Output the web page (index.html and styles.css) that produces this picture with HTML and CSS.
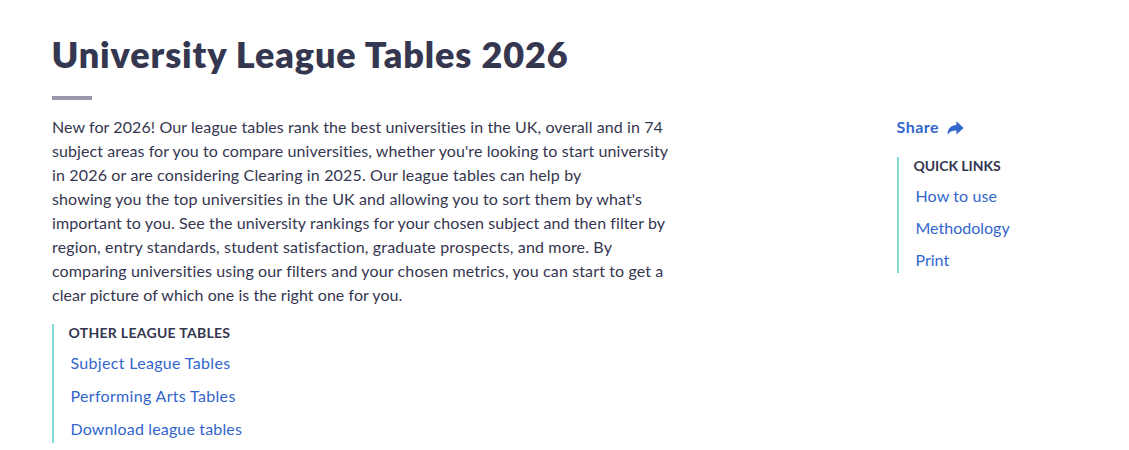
FILE: index.html
```html
<!DOCTYPE html>
<html lang="en">
<head>
<meta charset="utf-8">
<title>University League Tables 2026</title>
<link rel="stylesheet" href="styles.css">
</head>
<body>
<main class="page">
  <h1 class="title">University League Tables 2026</h1>
  <div class="rule"></div>
  <div class="columns">
    <section class="content">
      <p class="intro">
        <span class="line t2">New for 2026! Our league tables rank the best universities in the UK, overall and in 74</span>
        <span class="line t2">subject areas for you to compare universities, whether you're looking to start university</span>
        <span class="line t4">in 2026 or are considering Clearing in 2025. Our league tables can help by</span>
        <span class="line t3">showing you the top universities in the UK and allowing you to sort them by what's</span>
        <span class="line t2">important to you. See the university rankings for your chosen subject and then filter by</span>
        <span class="line t4">region, entry standards, student satisfaction, graduate prospects, and more. By</span>
        <span class="line t3">comparing universities using our filters and your chosen metrics, you can start to get a</span>
        <span class="line t1">clear picture of which one is the right one for you.</span>
      </p>
      <nav class="links tables">
        <h2 class="heading">OTHER LEAGUE TABLES</h2>
        <a class="t5" href="#">Subject League Tables</a>
        <a class="t5" href="#">Performing Arts Tables</a>
        <a class="t4" href="#">Download league tables</a>
      </nav>
    </section>
    <aside class="side">
      <a class="share" href="#"><span>Share</span>
        <svg class="arrow" viewBox="0 0 17 14"><path d="M9.4 .2 16.6 7 9.4 13.6V9.6C5.5 9.5 2.7 10.7.5 13.8.6 8.3 3.4 4.5 9.4 4.1Z"/></svg>
      </a>
      <nav class="links quick">
        <h2 class="heading">QUICK LINKS</h2>
        <a class="t3" href="#">How to use</a>
        <a href="#">Methodology</a>
        <a href="#">Print</a>
      </nav>
    </aside>
  </div>
</main>
</body>
</html>
```
FILE: styles.css
```css
* { box-sizing: border-box; }
body { margin: 0; background: #fff; color: #35364f; font: 16px/24px Lato, "Open Sans", sans-serif; }
.page { padding: 30px 52px 0; }
.title { margin: 0 0 0 -.5px; font-size: 36px; line-height: 48px; font-weight: 800; letter-spacing: .88px; }
.rule { width: 40px; height: 4px; margin-top: 18px; background: #9b9aaa; }
.columns { display: flex; padding-top: 15px; }
.content { width: 844.5px; }
.intro { margin: 0; }
.line { display: block; white-space: nowrap; font-variant-ligatures: no-common-ligatures; }
.t1 { letter-spacing: .05px; }
.t2 { letter-spacing: .087px; }
.t3 { letter-spacing: .125px; }
.t4 { letter-spacing: .155px; }
.t5 { letter-spacing: .32px; }
a { color: #3366cc; text-decoration: none; }
.links { display: flex; flex-direction: column; align-items: flex-start; border-left: 2px solid #84d9d7; padding-left: 16.5px; }
.heading { margin: 0 0 4px -2px; font-size: 14px; line-height: 18px; font-weight: 700; }
.tables { margin-top: 17px; height: 119px; width: 300px; }
.tables .heading { letter-spacing: .29px; }
.tables a { height: 33px; line-height: 33px; }
.quick { height: 116px; margin-top: 18px; padding-left: 17px; }
.quick .heading { margin-bottom: 5px; letter-spacing: -.05px; }
.quick a { height: 32px; line-height: 32px; }
.share { display: flex; align-items: center; gap: 8px; font-weight: 700; letter-spacing: .5px; }
.arrow { width: 17px; height: 14px; margin-top: 2px; fill: #3366cc; }
```
